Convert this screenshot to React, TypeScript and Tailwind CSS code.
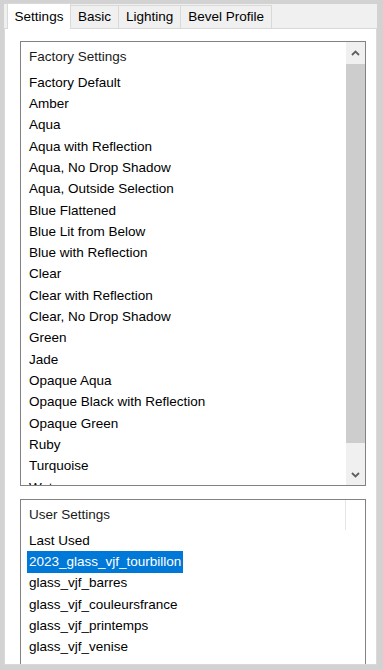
import React from "react";

const factory = [
  "Factory Default",
  "Amber",
  "Aqua",
  "Aqua with Reflection",
  "Aqua, No Drop Shadow",
  "Aqua, Outside Selection",
  "Blue Flattened",
  "Blue Lit from Below",
  "Blue with Reflection",
  "Clear",
  "Clear with Reflection",
  "Clear, No Drop Shadow",
  "Green",
  "Jade",
  "Opaque Aqua",
  "Opaque Black with Reflection",
  "Opaque Green",
  "Ruby",
  "Turquoise",
  "Water",
];

const user = [
  "Last Used",
  "2023_glass_vjf_tourbillon",
  "glass_vjf_barres",
  "glass_vjf_couleursfrance",
  "glass_vjf_printemps",
  "glass_vjf_venise",
];

const tabs = ["Settings", "Basic", "Lighting", "Bevel Profile"];

const Row: React.FC<{ label: string; selected?: boolean }> = ({ label, selected }) => (
  <div className="h-[21.33px] flex items-center pl-[6px] shrink-0">
    <span
      className={`px-[2px] h-full flex items-center whitespace-nowrap ${
        selected ? "bg-[#0078d7] text-white" : "text-black"
      }`}
    >
      {label}
    </span>
  </div>
);

const Chevron: React.FC<{ up?: boolean }> = ({ up }) => (
  <svg width="9" height="6" viewBox="0 0 9 6" className={up ? "" : "rotate-180"}>
    <path d="M1 5 L4.5 1.5 L8 5" fill="none" stroke="#606060" strokeWidth="1.8" />
  </svg>
);

export default function App() {
  return (
    <div
      className="w-[383px] h-[670px] bg-[#d2d2d2] pt-[4px] pl-[4px] pr-[6px] pb-[5px] text-[13.5px] overflow-hidden"
      style={{ fontFamily: '"Liberation Sans", Arial, sans-serif' }}
    >
      <div className="w-full h-full flex flex-col bg-[#f0f0f0]">
        {/* tab strip */}
        <div className="h-[24px] flex items-end pl-[3px] shrink-0 relative z-10">
          {tabs.map((t, i) =>
            i === 0 ? (
              <div
                key={t}
                className="h-[26px] -mb-[1px] w-[64px] bg-white border border-b-0 border-[#d9d9d9] flex items-start justify-center pt-[3px] text-black"
              >
                {t}
              </div>
            ) : (
              <div
                key={t}
                className="h-[23px] bg-[#f0f0f0] border border-b-0 border-l-0 border-[#d9d9d9] flex items-center justify-center px-[7px] text-black"
              >
                {t}
              </div>
            )
          )}
        </div>

        {/* panel */}
        <div className="flex-1 bg-white border border-[#d9d9d9] pl-[15px] pr-[10px] pt-[12px] flex flex-col gap-[13px] overflow-hidden">
          {/* factory list */}
          <div className="h-[445px] border border-[#828282] flex shrink-0">
            <div className="flex-1 flex flex-col overflow-hidden">
              <div className="h-[30px] flex items-center pl-[8px] shrink-0 text-[#1a1a1a]">
                Factory Settings
              </div>
              {factory.map((f) => (
                <Row key={f} label={f} />
              ))}
            </div>
            <div className="w-[19px] bg-[#f0f0f0] flex flex-col shrink-0">
              <div className="h-[22px] flex items-center justify-center shrink-0">
                <Chevron up />
              </div>
              <div className="h-[379px] bg-[#cdcdcd] shrink-0" />
              <div className="flex-1 flex items-end justify-center pb-[7px]">
                <Chevron />
              </div>
            </div>
          </div>

          {/* user list */}
          <div className="flex-1 border border-[#828282] border-b-0 flex flex-col overflow-hidden">
            <div className="h-[30px] flex shrink-0">
              <div className="w-[325px] flex items-center pl-[8px] text-[#1a1a1a] border-r border-[#e5e5e5]">
                User Settings
              </div>
            </div>
            {user.map((u, i) => (
              <Row key={u} label={u} selected={i === 1} />
            ))}
          </div>
        </div>
      </div>
    </div>
  );
}
